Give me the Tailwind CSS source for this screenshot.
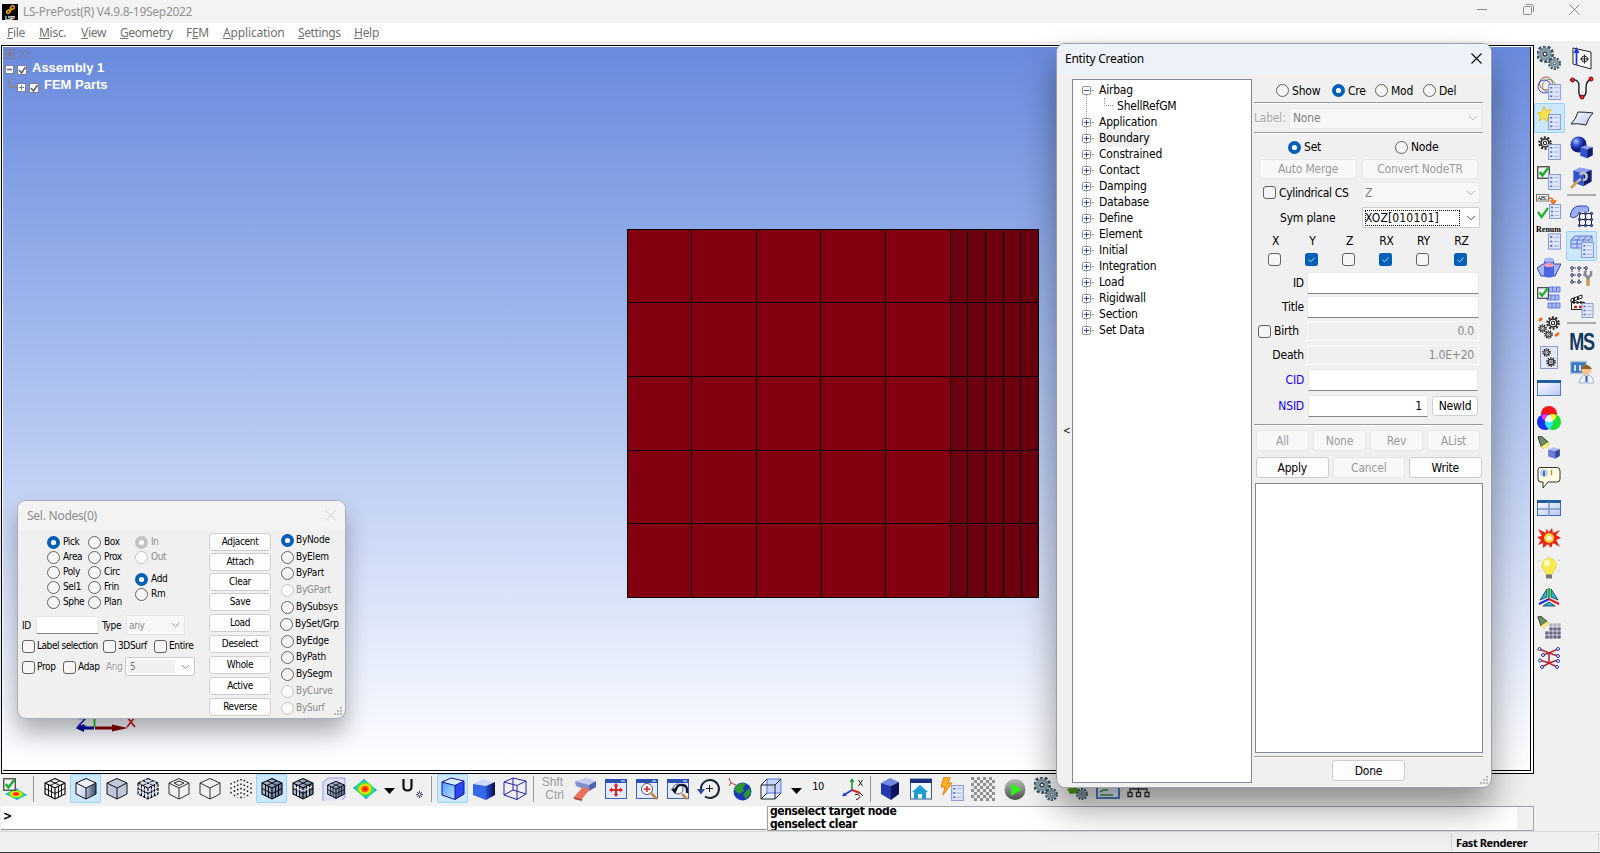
<!DOCTYPE html>
<html lang="en">
<head>
<meta charset="utf-8">
<title>LS-PrePost(R) V4.9.8-19Sep2022</title>
<script src="https://cdn.jsdelivr.net/npm/@tailwindcss/browser@4"></script>
</head>
<body class="w-[1600px] h-[853px] overflow-hidden bg-[#f0f0f0] font-['DejaVu_Sans_Condensed','DejaVu_Sans',sans-serif] text-[12px] text-black whitespace-nowrap relative">

<svg width="0" height="0" class="absolute">
<defs>
<radialGradient id="rainbow"><stop offset="0" stop-color="#e00"/><stop offset=".25" stop-color="#f51"/><stop offset=".42" stop-color="#fe0"/><stop offset=".6" stop-color="#4d3"/><stop offset=".8" stop-color="#1cd"/><stop offset="1" stop-color="#25f"/></radialGradient>
<linearGradient id="gl" x1="0" y1="0" x2="1" y2="1"><stop offset="0" stop-color="#fff"/><stop offset="1" stop-color="#b9c6f2"/></linearGradient>
<linearGradient id="gd" x1="0" y1="0" x2="1" y2="0"><stop offset="0" stop-color="#b4bfd8"/><stop offset="1" stop-color="#3c4a66"/></linearGradient>
<linearGradient id="gs" x1="0" y1="0" x2="1" y2=".4"><stop offset="0" stop-color="#c4cee4"/><stop offset="1" stop-color="#66789c"/></linearGradient>
<linearGradient id="gb" x1="0" y1="0" x2="1" y2="1"><stop offset="0" stop-color="#4a9dff"/><stop offset="1" stop-color="#bfe0ff"/></linearGradient>
<linearGradient id="gn" x1="0" y1="0" x2="1" y2="0"><stop offset="0" stop-color="#2a50e0"/><stop offset="1" stop-color="#0a0a40"/></linearGradient>
<radialGradient id="ball" cx=".35" cy=".3"><stop offset="0" stop-color="#b8c8ff"/><stop offset=".5" stop-color="#3a55d8"/><stop offset="1" stop-color="#101c80"/></radialGradient>
<linearGradient id="gray" x1="0" y1="0" x2="0" y2="1"><stop offset="0" stop-color="#bbb"/><stop offset=".5" stop-color="#888"/><stop offset="1" stop-color="#4a4a4a"/></linearGradient>
<symbol id="ron" viewBox="0 0 13 13"><circle cx="6.5" cy="6.5" r="6.5" fill="#005fb8"/><circle cx="6.5" cy="6.5" r="2.6" fill="#fff"/></symbol>
<symbol id="roff" viewBox="0 0 13 13"><circle cx="6.5" cy="6.5" r="6" fill="#f6f6f6" stroke="#626262"/></symbol>
<symbol id="rdis" viewBox="0 0 13 13"><circle cx="6.5" cy="6.5" r="6" fill="#fbfbfb" stroke="#c3c3c3"/></symbol>
<symbol id="rond" viewBox="0 0 13 13"><circle cx="6.5" cy="6.5" r="6.5" fill="#c3c3c3"/><circle cx="6.5" cy="6.5" r="2.6" fill="#fff"/></symbol>
<symbol id="coff" viewBox="0 0 13 13"><rect x=".5" y=".5" width="12" height="12" rx="2.5" fill="#f6f6f6" stroke="#626262"/></symbol>
<symbol id="con" viewBox="0 0 13 13"><rect width="13" height="13" rx="2.5" fill="#005fb8"/><path d="M3.5 6.8L5.6 8.8L9.6 4.6" fill="none" stroke="#cfe2f3"/></symbol>
<symbol id="chev" viewBox="0 0 10 6"><path d="M1 .8L5 4.8L9 .8" fill="none" stroke="currentColor"/></symbol>
<symbol id="plus" viewBox="0 0 9 9"><rect x=".5" y=".5" width="8" height="8" rx="1" fill="#fafafa" stroke="#8f8f8f"/><path d="M2 4.5H7M4.5 2V7" stroke="#2f4fa8"/></symbol>
<symbol id="minus" viewBox="0 0 9 9"><rect x=".5" y=".5" width="8" height="8" rx="1" fill="#fafafa" stroke="#8f8f8f"/><path d="M2 4.5H7" stroke="#2f4fa8"/></symbol>
<symbol id="grip" viewBox="0 0 9 9"><path d="M6 0h2v2h-2zM6 3h2v2h-2zM6 6h2v2h-2zM3 3h2v2h-2zM3 6h2v2h-2zM0 6h2v2h-2z" fill="#b9b9b9"/></symbol>
<symbol id="grid9" viewBox="0 0 24 24"><path d="M12 1.500L22 6V17L12 22L2 17V6ZM2 6L12 11L22 6M12 11V22" fill="none" stroke="#000" stroke-width="1.100"/><path d="M2 11.500L12 16.500L22 11.500M5.500 7.700V18.700M8.500 9.300V20.300M15.500 9.300V20.300M18.500 7.700V18.700M7 3.750L17 8.500M17 3.750L7 8.500" fill="none" stroke="#000" stroke-width=".9"/></symbol>
<symbol id="list" viewBox="0 0 12 15"><rect x=".5" y=".5" width="11" height="14" fill="#dfe8fc" stroke="#8a9bd0"/><path d="M2 3.500h2M2 7.500h2M2 11.500h2" stroke="#4a62c8" stroke-width="1.600"/><path d="M5.500 3.500h4.500M5.500 7.500h4.500M5.500 11.500h4.500" stroke="#a4b2e0"/></symbol>
<symbol id="gear" viewBox="0 0 16 16"><circle cx="8" cy="8" r="6.500" fill="none" stroke="#222" stroke-width="2.400" stroke-dasharray="2.200 1.880"/><circle cx="8" cy="8" r="4.500" fill="#f4f4f4" stroke="#222" stroke-width="1.800"/><circle cx="8" cy="8" r="1.900" fill="#fff" stroke="#222" stroke-width="1.200"/></symbol>
<symbol id="steel" viewBox="0 0 16 16"><circle cx="8" cy="8" r="6.500" fill="none" stroke="#3e5260" stroke-width="3" stroke-dasharray="2.600 1.480"/><circle cx="8" cy="8" r="4.400" fill="#c6d6de" stroke="#7d97a6" stroke-width="2.800"/><circle cx="8" cy="8" r="1.800" fill="#f0f0f0" stroke="#2a3a44" stroke-width="1.200"/></symbol>
<symbol id="gears" viewBox="0 0 24 24"><use href="#steel" x="-1" y="-1" width="18" height="18"/><use href="#steel" x="11" y="11" width="13" height="13"/></symbol>
<symbol id="tick" viewBox="0 0 12 12"><rect x=".7" y=".7" width="10.600" height="10.600" fill="#f4f4f4" stroke="#444" stroke-width="1.200"/><path d="M2.500 5.500L5 8.800L10.500 1.500" fill="none" stroke="#12b025" stroke-width="2.200"/></symbol>
<symbol id="bcube" viewBox="0 0 24 24"><path d="M2 5L9 1.500L22 4L13 8Z" fill="#8ba0f0"/><path d="M2 5L13 8V22L2 18Z" fill="#3553cc"/><path d="M13 8L22 4V17L13 22Z" fill="#111c70"/></symbol>
<symbol id="scube" viewBox="0 0 24 24"><path d="M2 6L11 2L22 5L14 9Z" fill="#b0baf0"/><path d="M2 6L14 9V22L2 18Z" fill="#6a7cd8"/><path d="M14 9L22 5V17L14 22Z" fill="#3a449c"/></symbol>
<symbol id="lamp" viewBox="0 0 14 14"><path d="M1 1L5 .5L12 6.500L4.500 11.500Z" fill="#6c8c68" stroke="#2a3a28"/><path d="M4.500 11.500L12 6.500L13.500 9.500L7 13.500Z" fill="#fff27a" stroke="#b8a840" stroke-width=".5"/></symbol>
<symbol id="win" viewBox="0 0 24 24"><rect x="1.500" y="2.500" width="21" height="19" fill="#e4ebff" stroke="#3b62b4"/><path d="M1 4h22" stroke="#2a52b0" stroke-width="4"/><path d="M17 4h4" stroke="#fff"/></symbol>
</defs>
</svg>

<div class="flex flex-col w-full h-full">
  <!-- title bar -->
  <header class="h-[23px] bg-[#f3f3f3] flex items-center pl-0.5 pr-5 text-[#929292] font-['Noto_Sans','Open_Sans',sans-serif] text-[12px]">
    <svg class="w-4 h-4 mr-[5px]" viewBox="0 0 16 16"><rect width="16" height="16" fill="#000"/><path d="M9 4.500a1.800 1.800 0 1 1 3-2a1.800 1.800 0 1 1-3 2M8.500 5.500l-3 1a1.500 1.500 0 1 0 2 2l1.500-2.500" fill="none" stroke="#f5a800" stroke-width="1.500"/><text x="3" y="15.500" font-size="6" font-weight="bold" fill="#fff" font-family="Liberation Sans" textLength="10">LSP</text></svg>
    <span class="tracking-[-0.29px]">LS-PrePost(R) V4.9.8-19Sep2022</span>
    <div class="ml-auto -mt-1 flex items-center gap-[35px] text-[#8a8a8a]">
      <svg class="w-[11px] h-[11px]" viewBox="0 0 11 11"><path d="M0 5.500H10" stroke="currentColor"/></svg>
      <svg class="w-[11px] h-[11px]" viewBox="0 0 11 11"><path d="M.5 3.500a1 1 0 0 1 1-1h6a1 1 0 0 1 1 1v6a1 1 0 0 1-1 1h-6a1 1 0 0 1-1-1zM3 .5h5a2.500 2.500 0 0 1 2.500 2.500v5" fill="none" stroke="currentColor"/></svg>
      <svg class="w-[11px] h-[11px]" viewBox="0 0 11 11"><path d="M.5 .5L10.500 10.500M10.500 .5L.5 10.500" stroke="currentColor"/></svg>
    </div>
  </header>
  <!-- menu bar -->
  <nav class="h-[18px] bg-white flex items-center pt-[2px] pl-[7px] text-[#6f6f6f] font-['Noto_Sans','Open_Sans',sans-serif] text-[12px] tracking-[-0.28px]">
    <span class="w-8"><u>F</u>ile</span><span class="w-[42px]"><u>M</u>isc.</span><span class="w-[39px]"><u>V</u>iew</span><span class="w-[66px] tracking-[-0.42px]"><u>G</u>eometry</span><span class="w-[37px]">F<u>E</u>M</span><span class="w-[75px] tracking-[-0.15px]"><u>A</u>pplication</span><span class="w-14 tracking-[-0.4px]"><u>S</u>ettings</span><span><u>H</u>elp</span>
  </nav>

  <div class="flex h-[765px]">
    <div class="w-[1534px] flex flex-col">
      <!-- 3D viewport -->
      <div class="mt-1 ml-px w-[1533px] h-[729px] shrink-0 border border-black bg-white pt-px pl-px">
        <div class="relative w-[1528px] h-[724px] border-r border-b border-black bg-linear-to-b from-[#698add] to-white">
          <svg class="absolute inset-0 w-[1527px] h-[723px]" viewBox="3 47 1527 723" shape-rendering="crispEdges">
            <path d="M627 229H950V597H627Z" fill="#820010"/><path d="M950 229H1038V597H950Z" fill="#6c000f"/>
            <path d="M627.500 229V598M691.500 229V597M756.500 229V597M820.500 229V523M821.500 523V597M885.500 229V597M950.500 229V597M967.500 229V597M985.500 229V597M1003.500 229V597M1020.500 229V564M1021.500 564V597M1038.500 229V598M627 229.500H1038M627 302.500H1038M627 376.500H1038M627 450.500H1030M1030 449.500H1038M627 523.500H1038M627 597.500H1038" fill="none" stroke="#000"/>
          </svg>
          <svg class="absolute left-[69px] top-[665px] w-[68px] h-[26px]" viewBox="72 712 68 26">
            <path d="M94.500 714V727" stroke="#2c2" stroke-width="2"/><path d="M94 728H80" stroke="#00009a" stroke-width="3"/><path d="M75.500 728L84 724V732Z" fill="#00009a"/><path d="M95 728H113" stroke="#8a0000" stroke-width="3"/><path d="M112 724.500L128 728L112 731.500Z" fill="#8a0000"/>
            <path d="M127 717L135 727M135 717L127 727" stroke="#d01010" stroke-width="1.600"/><path d="M78 718.500H85.500L78.500 726H86" stroke="#1818c0" stroke-width="1.600" fill="none"/>
          </svg>
          <div class="absolute left-0 top-0 pl-[2px] pt-px text-white font-['Liberation_Sans',sans-serif] font-bold text-[13px] tracking-0">
            <svg class="block w-[26px] h-3" viewBox="0 0 26 12"><rect x=".5" y="1.500" width="9" height="9" fill="none" stroke="#7d7d92"/><rect x="2.500" y="3.500" width="5" height="5" fill="#7d7d92"/><path d="M14 2l5 4-5 4M19 2l5 4-5 4" fill="none" stroke="#7d7d92"/></svg>
            <div class="flex items-center h-[17px]">
              <svg class="w-[23px] h-[15px] mr-1" viewBox="0 0 23 15"><rect x=".5" y="4.500" width="8" height="8" fill="#fff" stroke="#7d7d92"/><path d="M2 8.500h5" stroke="#7d7d92" stroke-width="2"/><rect x="12.500" y="4.500" width="9" height="9" fill="#fff" stroke="#7d7d92"/><path d="M14 9l2.500 3 4-6" fill="none" stroke="#556" stroke-width="1.400"/></svg>
              <span class="-mt-0.5">Assembly 1</span>
            </div>
            <div class="flex items-center h-[17px]">
              <svg class="w-[36px] h-[17px] mr-[3px]" viewBox="0 0 36 17"><path d="M4.500 0V10H12" fill="none" stroke="#888896" stroke-width="2"/><rect x="12.500" y="6.500" width="8" height="8" fill="#fff" stroke="#7d7d92"/><path d="M14 10.500h5M16.500 8v5" stroke="#7d7d92"/><rect x="24.500" y="6.500" width="9" height="9" fill="#fff" stroke="#7d7d92"/><path d="M26 11l2.500 3 4-6" fill="none" stroke="#556" stroke-width="1.400"/></svg>
              <span class="-mt-0.5">FEM Parts</span>
            </div>
          </div>
        </div>
      </div>

      <!-- bottom toolbar -->
      <div class="flex items-center h-[29px] [&>svg]:shrink-0">
        <svg class="w-6 h-6 mx-[3px]" viewBox="0 0 24 24"><path d="M2 17L13 11L24 18L14 23Z" fill="url(#rainbow)"/><use href="#tick" x="0" y="1" width="13" height="13"/></svg>
        <div class="w-px h-[26px] ml-[3px] mr-[5px] bg-[#999]"></div>
        <div class="w-[31px] flex justify-center"><svg class="w-6 h-6"><use href="#grid9"/></svg></div>
        <div class="w-[31px] h-[29px] flex justify-center items-center bg-[#cce8ff] border border-[#99d1ff] rounded-xs"><svg class="w-6 h-6" viewBox="0 0 24 24"><path d="M12 1.500L22 6L12 11L2 6Z" fill="#eef1ff"/><path d="M2 6L12 11V22L2 17Z" fill="url(#gl)"/><path d="M12 11L22 6V17L12 22Z" fill="url(#gd)"/><path d="M12 1.500L22 6V17L12 22L2 17V6ZM2 6L12 11L22 6M12 11V22" fill="none" stroke="#111"/></svg></div>
        <div class="w-[31px] flex justify-center"><svg class="w-6 h-6" viewBox="0 0 24 24"><path d="M12 1.500L22 6V17L12 22L2 17V6Z" fill="#c0c9dc"/><path d="M12 1.500L22 6V17L12 22L2 17V6ZM2 6L12 11L22 6M12 11V22" fill="none" stroke="#111"/></svg></div>
        <div class="w-[31px] flex justify-center"><svg class="w-6 h-6" viewBox="0 0 24 24"><path d="M12 1.500L22 6V17L12 22L2 17V6Z" fill="#d8def0"/><use href="#grid9" stroke-dasharray="3 1"/></svg></div>
        <div class="w-[31px] flex justify-center"><svg class="w-6 h-6" viewBox="0 0 24 24"><path d="M12 1.500L22 6V17L12 22L2 17V6ZM2 6L12 11L22 6M12 11V22M7 6L12 4L17 6L12 8.500Z" fill="none" stroke="#333"/></svg></div>
        <div class="w-[31px] flex justify-center"><svg class="w-6 h-6" viewBox="0 0 24 24"><path d="M12 1.500L22 6V17L12 22L2 17V6ZM2 6L12 11L22 6M12 11V22" fill="none" stroke="#333"/></svg></div>
        <div class="w-[31px] flex justify-center"><svg class="w-6 h-6" viewBox="0 0 24 24"><path d="M12 2V22M2 6V18M22 6V18M5.500 4.500V20M8.700 3V21M15.300 3V21M18.500 4.500V20" stroke="#222" stroke-width="1.500" stroke-dasharray="1.600 2.800"/></svg></div>
        <div class="w-[31px] h-[29px] flex justify-center items-center bg-[#cce8ff] border border-[#99d1ff] rounded-xs"><svg class="w-6 h-6" viewBox="0 0 24 24"><path d="M12 1.500L22 6V17L12 22L2 17V6Z" fill="url(#gs)"/><use href="#grid9"/></svg></div>
        <div class="w-[31px] flex justify-center"><svg class="w-6 h-6" viewBox="0 0 24 24"><path d="M12 1.500L22 6V17L12 22L2 17V6Z" fill="url(#gs)"/><use href="#grid9"/><path d="M3 9.500L12 14L21 9.500M7 9V19M17 9V19" fill="none" stroke="#fff"/></svg></div>
        <div class="w-[31px] flex justify-center"><svg class="w-6 h-6" viewBox="0 0 24 24"><path d="M1 24V5L6 1H23V20L20 23" fill="#dfe0fb" stroke="#9a9af0"/><path d="M14 4.500L22.500 8V17.500L14 21.500L5.500 17.500V8Z" fill="url(#gs)"/><use href="#grid9" x="4" y="3" width="20" height="20"/></svg></div>
        <div class="w-[31px] flex justify-center"><svg class="w-6 h-6" viewBox="0 0 24 24"><path d="M0 11L11 2L24 13L13 22Z" fill="url(#rainbow)"/></svg></div>
        <div class="w-[18px] flex justify-center"><svg class="w-[11px] h-[6px] mt-1" viewBox="0 0 11 6"><path d="M0 0H11L5.500 6Z"/></svg></div>
        <div class="w-7 flex justify-center"><svg class="w-6 h-6" viewBox="0 0 24 24"><path d="M3.500 2V9.500Q3.500 13.500 7.500 13.500Q11.500 13.500 11.500 9.500V2" fill="none" stroke="#111" stroke-width="2.200"/><path d="M19.500 14v7M16 17.500h7M17 15l5 5M22 15l-5 5" stroke="#446"/><circle cx="19.500" cy="17.500" r="1.500" fill="#fff" stroke="#446"/></svg></div>
        <div class="w-px h-[26px] ml-[5px] mr-[5px] bg-[#999]"></div>
        <div class="w-[31px] h-[29px] flex justify-center items-center bg-[#cce8ff] border border-[#99d1ff] rounded-xs"><svg class="w-6 h-6" viewBox="0 0 24 24"><path d="M1 5L10 1L23 4L14 8.500Z" fill="#d6ecff"/><path d="M1 5L14 8.500V22.500L1 18Z" fill="url(#gb)"/><path d="M14 8.500L23 4V17L14 22.500Z" fill="#2a48f0"/><path d="M1 5L10 1L23 4V17L14 22.500L1 18ZM1 5L14 8.500L23 4M14 8.500V22.500" fill="none" stroke="#1111a0"/></svg></div>
        <div class="w-[31px] flex justify-center"><svg class="w-6 h-6" viewBox="0 0 24 24"><path d="M1 7L10 2L23 5L14 9Z" fill="#cfdcff"/><path d="M1 7L14 9V23L1 18Z" fill="#3668ea"/><path d="M14 9L23 5V18L14 23Z" fill="url(#gn)"/></svg></div>
        <div class="w-[31px] flex justify-center"><svg class="w-6 h-6" viewBox="0 0 24 24"><path d="M1 5L10 1L23 4V17L14 22.500L1 18ZM1 5L14 8.500L23 4M14 8.500V22.500M10 1V13L1 18M10 13L23 17" fill="none" stroke="#2222b0"/></svg></div>
        <div class="w-px h-[26px] ml-[3px] mr-[3px] bg-[#999]"></div>
        <div class="w-8 flex flex-col items-end pr-[5px] text-[#9b9b9b] font-['Liberation_Sans',sans-serif] text-[12px] leading-[13px]"><span class="mr-px">Shft</span><span>Ctrl</span></div>
        <div class="w-[31px] flex justify-center"><svg class="w-6 h-6" viewBox="0 0 24 24"><path d="M2 4L13 1L23 4L16 8Z" fill="#c5cdf3"/><path d="M2 4L16 8V14L3 9Z" fill="#8090d0"/><path d="M16 8L23 4V10L16 14Z" fill="#5262b0"/><path d="M1 20L10 10L17 12L9 22Z" fill="#e8705c"/><path d="M1 20L9 22V24L1 22Z" fill="#b04030"/></svg></div>
        <div class="w-[31px] flex justify-center"><svg class="w-6 h-6"><use href="#win"/><path d="M12 7V19M6 13H18" stroke="#d22" stroke-width="2"/><path d="M12 6l2.500 3h-5zM12 20l2.500-3h-5zM5 13l3-2.500v5zM19 13l-3-2.500v5z" fill="#d22"/></svg></div>
        <div class="w-[31px] flex justify-center"><svg class="w-6 h-6"><use href="#win"/><circle cx="12" cy="12" r="5.500" fill="#fff" stroke="#556"/><path d="M12 9V15M9 12H15" stroke="#d22" stroke-width="1.600"/><path d="M16 16L22 22" stroke="#c98a3a" stroke-width="2.500"/></svg></div>
        <div class="w-[31px] flex justify-center"><svg class="w-6 h-6"><use href="#win"/><circle cx="12" cy="12" r="5" fill="#fff" stroke="#556"/><path d="M9 14Q11 7 17 8Q22 9 21 16" fill="none" stroke="#111830" stroke-width="2.400"/><path d="M5 12L12 11L9 17Z" fill="#111830"/><path d="M16 17L21 22" stroke="#c98a3a" stroke-width="2.500"/></svg></div>
        <div class="w-[31px] flex justify-center"><svg class="w-6 h-6" viewBox="0 0 24 24"><path d="M4 13A9 9 0 1 1 8 19.500" fill="none" stroke="#1c2436" stroke-width="2"/><path d="M12.500 8V15M9 11.500H16" stroke="#222"/><path d="M0 12H8L4 17.500Z" fill="#2c4c9c"/></svg></div>
        <div class="w-[31px] flex justify-center"><svg class="w-6 h-6" viewBox="0 0 24 24"><circle cx="14.500" cy="14.500" r="9" fill="#1c36b8"/><path d="M8 9Q13 4 18 7L15 11L16 14L11 17L6 13ZM18 14L22 11L23 16L18 22L15 18Z" fill="#2a9a34"/><path d="M1 1L3 6L8 8M3 6L1 9" stroke="#c33" fill="none"/></svg></div>
        <div class="w-[31px] flex justify-center"><svg class="w-6 h-6" viewBox="0 0 24 24"><path d="M2 8L8 2H22V16L16 22H2Z" fill="#e8efff"/><path d="M8 2H22V16H8Z" fill="#c5d5ff" stroke="#5870d8"/><path d="M2 8H16V22H2ZM2 8L8 2M16 8L22 2M16 22L22 16M2 22L8 16" fill="none" stroke="#222"/></svg></div>
        <div class="w-5 flex justify-center"><svg class="w-[11px] h-[6px] mt-1" viewBox="0 0 11 6"><path d="M0 0H11L5.500 6Z"/></svg></div>
        <div class="w-6 text-center text-[11px] -mt-[3px] tracking-[-0.5px]">10</div>
        <div class="w-[31px] ml-[7px] flex justify-center"><svg class="w-6 h-6" viewBox="0 0 24 24"><path d="M11 13V3" stroke="#1a9a2a" stroke-width="1.600"/><path d="M8.500 5L11 1L13.500 5Z" fill="#1a9a2a"/><path d="M11 13L3 18" stroke="#1a3ad0" stroke-width="1.600"/><path d="M1 19.500L3 15.500L6 18.500Z" fill="#1a3ad0"/><path d="M11 13L19 16" stroke="#d02020" stroke-width="2"/><path d="M17.500 3l4 6M21.500 3l-4 6M14 17.500q4-1 5 2q-1 3-4 3M19 16l3 3" stroke="#222" fill="none"/></svg></div>
        <div class="w-px h-[26px] ml-[2px] mr-[3px] bg-[#999]"></div>
        <div class="w-[31.2px] shrink-0 flex justify-center"><svg class="w-6 h-6" viewBox="0 0 24 24"><path d="M3 6L12 1L21 5L13 9Z" fill="#7088e0"/><path d="M3 6L13 9V23L3 17Z" fill="#2438b0"/><path d="M13 9L21 5V17L13 23Z" fill="#0c1460"/></svg></div>
        <div class="w-[31.2px] shrink-0 flex justify-center"><svg class="w-6 h-6" viewBox="0 0 24 24"><rect x="1.500" y="2" width="21" height="20" fill="#f2f6fb" stroke="#3a5b8c"/><path d="M1 4H23" stroke="#1c2f80" stroke-width="4"/><path d="M11 8L19 15H17V22H13V17H9V22H5V15H3Z" fill="#1a9fd0"/></svg></div>
        <div class="w-[31.2px] shrink-0 flex justify-center"><svg class="w-6 h-6" viewBox="0 0 24 24"><path d="M4 0H10L8 6H12L3 18L5 10H1Z" fill="#ffb21c" stroke="#e07a10"/><use href="#list" x="11" y="8" width="13" height="16"/></svg></div>
        <div class="w-[31.2px] shrink-0 flex justify-center"><svg class="w-6 h-6" viewBox="0 0 24 24"><defs><pattern id="chk" width="6" height="6" patternUnits="userSpaceOnUse"><rect width="6" height="6" fill="#ececec"/><path d="M0 0h3v3h-3zM3 3h3v3h-3z" fill="#909090"/></pattern></defs><rect width="24" height="24" fill="url(#chk)"/></svg></div>
        <div class="w-[31.2px] shrink-0 flex justify-center"><svg class="w-6 h-6" viewBox="0 0 24 24"><circle cx="13" cy="12.500" r="10.500" fill="url(#gray)"/><path d="M9 6L20 12.500L9 19Z" fill="#2ef01a"/></svg></div>
        <div class="w-[31.2px] shrink-0 flex justify-center"><svg class="w-6 h-6 overflow-visible"><use href="#gears"/></svg></div>
        <div class="w-[31.2px] shrink-0 flex justify-center"><svg class="w-6 h-6" viewBox="0 0 24 24"><path d="M2 12L12 9L14 16L5 17Z" fill="#4aa012"/><use href="#steel" x="11" y="11" width="12" height="12"/></svg></div>
        <div class="w-[31.2px] shrink-0 flex justify-center"><svg class="w-6 h-6" viewBox="0 0 24 24"><rect x="1" y="2" width="22" height="19" fill="#e6eeff" stroke="#4f7fc0" stroke-width="2"/><path d="M4 15Q8 12 12 13M4 18H17" stroke="#3a9a3a" fill="none" stroke-width="1.500"/></svg></div>
        <div class="w-[31.2px] shrink-0 flex justify-center"><svg class="w-6 h-6" viewBox="0 0 24 24"><path d="M3 15V12H20V15M11.500 8V15M1 15.500h4v4H1zM9.500 15.500h4v4h-4zM18 15.500h4v4h-4z" fill="none" stroke="#333" stroke-width="1.300"/></svg></div>
      </div>
    </div>

    <!-- side toolbars -->
    <div class="w-[30px] pt-[2px] flex flex-col items-center [&_svg]:w-6 [&_svg]:h-6 [&>div]:w-[31px] [&>div]:h-[30px] [&>div]:flex [&>div]:items-center [&>div]:justify-center [&>div]:shrink-0">
      <div><svg class="overflow-visible"><use href="#gears"/></svg></div>
      <div><svg viewBox="0 0 24 24"><circle cx="9" cy="7.500" r="6.500" fill="none" stroke="#c44"/><circle cx="12" cy="10" r="6.500" fill="none" stroke="#5a5"/><circle cx="7.500" cy="10.500" r="6.500" fill="none" stroke="#44c"/><use href="#list" x="11" y="8" width="13" height="16"/></svg></div>
      <div class="bg-[#cce8ff] border border-[#99d1ff] rounded-xs"><svg viewBox="0 0 24 24"><path d="M7 0L9 5L14 3L12 8L16 10L11 11L10 16L7 12L2 15L4 10L0 7L5 6Z" fill="#ffe34a" stroke="#d8b018" stroke-width=".7"/><use href="#list" x="11" y="8" width="13" height="16"/></svg></div>
      <div><svg viewBox="0 0 24 24"><use href="#gear" x="1" y="0" width="14" height="14"/><use href="#list" x="11" y="8" width="13" height="16"/></svg></div>
      <div><svg viewBox="0 0 24 24"><use href="#tick" x="0" y="0" width="13" height="13"/><use href="#list" x="11" y="8" width="13" height="16"/></svg></div>
      <div><svg viewBox="0 0 24 24" class="overflow-visible"><rect x="-.5" y="-1.500" width="12" height="6.500" fill="#fff" stroke="#777"/><text x="0" y="4" font-size="6" font-family="Liberation Serif" textLength="11">ABC</text><path d="M12 2Q16 2 16 5M14 5h4.500l-2.200 3z" fill="none" stroke="#e8681a" stroke-width="1.500"/><use href="#list" x="12" y="8" width="12" height="15"/><path d="M1 16L4.500 21L11 12" fill="none" stroke="#22b030" stroke-width="2.200"/></svg></div>
      <div><svg viewBox="0 0 24 24" class="overflow-visible"><text x="-1" y="5.500" font-size="8" font-weight="bold" font-family="Liberation Serif" textLength="25">Renum</text><use href="#list" x="11" y="7" width="13" height="17"/></svg></div>
      <div><svg viewBox="0 0 24 24"><path d="M0 12L6 8H24L18 20H4Z" fill="#a4b4fa" stroke="#3048c0"/><path d="M7 4V20Q12 23 17 20V4" fill="#4a66e0"/><ellipse cx="12" cy="4" rx="5" ry="2.500" fill="#a8b8ff"/><ellipse cx="12" cy="9" rx="5" ry="2" fill="#ff9ab8"/></svg></div>
      <div><svg viewBox="0 0 24 24"><path d="M12 1h11v5H12zM10 9h12v5H10zM11 17h12v5H11z" fill="#a8b8f8"/><path d="M12 1h11v5H12zM10 9h12v5H10zM11 17h12v5H11zM15.500 1v5M19.500 1v5M14 9v5M18 9v5M15 17v5M19 17v5" fill="none" stroke="#5a76dc" stroke-width=".9"/><use href="#tick" x="0" y="1" width="12" height="12"/></svg></div>
      <div><svg viewBox="0 0 24 24"><use href="#gear" x="9" y="0" width="14" height="14"/><use href="#gear" x="1" y="8" width="9" height="9"/><use href="#gear" x="7" y="14" width="9" height="9"/><path d="M2 5L5 2M18 20L22 17" stroke="#e8681a" stroke-width="2.500"/></svg></div>
      <div><svg viewBox="0 0 24 24"><rect x="3.500" y=".5" width="17" height="22" fill="#e2eafc" stroke="#8a9bd0"/><use href="#gear" x="5" y="2" width="9" height="9"/><use href="#gear" x="9" y="11" width="10" height="10"/></svg></div>
      <div><svg viewBox="0 0 24 24"><rect x=".5" y="4.500" width="23" height="15" fill="url(#gl)" stroke="#4a80c0"/><path d="M0 5.500H24" stroke="#1f5f9f" stroke-width="3"/></svg></div>
      <div><svg viewBox="0 0 24 24"><circle cx="12" cy="8" r="8" fill="#f01818"/><circle cx="8" cy="16" r="8" fill="#1830f0"/><circle cx="16" cy="16" r="8" fill="#18e030"/><path d="M8 16a8 8 0 0 1 4-7a8 8 0 0 1 0 14a8 8 0 0 1-4-7z" fill="#30e8f0"/><path d="M4.300 9.500A8 8 0 0 1 12 9A8 8 0 0 0 8 15A8 8 0 0 1 4.300 9.500Z" fill="#f040e0"/><path d="M19.700 9.500A8 8 0 0 0 12 9A8 8 0 0 1 16 15A8 8 0 0 0 19.700 9.500Z" fill="#ffee30"/><path d="M12 9A8 8 0 0 1 16 15A8 8 0 0 1 8 15A8 8 0 0 1 12 9Z" fill="#fff"/></svg></div>
      <div><svg viewBox="0 0 24 24"><use href="#lamp" x="0" y="0" width="13" height="13"/><use href="#scube" x="10" y="10" width="14" height="14"/></svg></div>
      <div><svg viewBox="0 0 24 24"><path d="M3 1.500H20Q23 1.500 23 5V13Q23 16 20 16H11L6 22V16H4Q1 16 1 13V4Q1 1.500 3 1.500Z" fill="#ffffe0" stroke="#333"/><circle cx="7" cy="7" r="4" fill="#b8d0ec"/><path d="M7 5v5" stroke="#2448a8" stroke-width="1.500"/><path d="M14.500 4v5" stroke="#c08a40" stroke-width="1.500"/></svg></div>
      <div><svg viewBox="0 0 24 24"><rect x=".5" y="4.500" width="23" height="15" fill="url(#gl)" stroke="#3a70b8"/><path d="M0 5.500H24" stroke="#1f5f9f" stroke-width="3"/><path d="M12 6V20M1 13H23" stroke="#7a96cc" stroke-width="1.500"/></svg></div>
      <div><svg viewBox="0 0 24 24"><path d="M12 6L15 2L16 7L23 4L19 9L24 12L19 14L23 21L16 17L14 22L11 18L6 22L6 17L1 19L4 14L0 11L5 10L1 3L9 7L9 3Z" fill="#f02010"/><circle cx="12" cy="12" r="5" fill="#ffd030"/><circle cx="12" cy="12" r="2.500" fill="#fff"/></svg></div>
      <div><svg viewBox="0 0 24 24"><path d="M12 2a7.500 7.500 0 0 1 7.500 7.500c0 4-4 5-4 9h-7c0-4-4-5-4-9A7.500 7.500 0 0 1 12 2z" fill="#f6ec50" stroke="#d8cc60" stroke-width=".6"/><ellipse cx="10" cy="7" rx="3" ry="3.500" fill="#fffcb8"/><path d="M9 18.500h6v4H9z" fill="#777"/><path d="M1 4l2 1M23 4l-2 1M1 15l2-1M23 15l-2-1" stroke="#ccc"/></svg></div>
      <div><svg viewBox="0 0 24 24"><path d="M10 3L3 14L10 11ZM14 3L21 14L14 11ZM6 20L12 16L18 20Z" fill="#28b8d8" stroke="#134" stroke-width=".8"/><path d="M12 13V2" stroke="#18c030" stroke-width="2"/><path d="M12 13L2 18" stroke="#2030e0" stroke-width="2"/><path d="M12 13L22 18" stroke="#e02020" stroke-width="2"/></svg></div>
      <div><svg viewBox="0 0 24 24"><use href="#lamp" x="0" y="0" width="12" height="12"/><g fill="none" stroke="#404068" stroke-width="1.100"><path stroke="#a0a0b8" d="M13 8h2v2h-2zM17 8h2v2h-2zM21 8h2v2h-2z"/><path d="M13 12h2v2h-2zM17 12h2v2h-2zM21 12h2v2h-2zM9 16h2v2h-2zM13 16h2v2h-2zM17 16h2v2h-2zM21 16h2v2h-2zM9 20h2v2h-2zM13 20h2v2h-2zM17 20h2v2h-2zM21 20h2v2h-2z"/></g></svg></div>
      <div><svg viewBox="0 0 24 24"><path d="M2 3L12 7L21 3M6 9L12 7L21 10M12 7V17M3 14L12 17L21 14M5 21L12 17L20 21" fill="none" stroke="#b82030" stroke-width="1.500"/><g fill="#fff" stroke="#2030a0"><circle cx="2.500" cy="3" r="1.500"/><circle cx="21" cy="3" r="1.500"/><circle cx="6" cy="9" r="1.500"/><circle cx="21" cy="10" r="1.500"/><circle cx="3" cy="14.500" r="1.500"/><circle cx="21" cy="15" r="1.500"/><circle cx="5" cy="21" r="1.500"/><circle cx="20" cy="21" r="1.500"/></g></svg></div>
    </div>
    <div class="w-[35px] pt-[2px] flex flex-col items-center [&_svg]:w-6 [&_svg]:h-6 [&>div]:w-[31px] [&>div]:h-[30px] [&>div]:flex [&>div]:items-center [&>div]:justify-center [&>div]:shrink-0 [&>hr]:shrink-0">
      <div><svg viewBox="0 0 24 24"><path d="M3 2L21 6V23L3 18Z" fill="#fff" stroke="#222"/><path d="M6.500 19V5" stroke="#1838e0" stroke-width="1.800"/><path d="M3.500 7L6.500 1L9.500 7Z" fill="#1838e0"/><circle cx="14.500" cy="13" r="3" fill="none" stroke="#222"/><path d="M14.500 8.500v9M10 13h9" stroke="#222"/></svg></div>
      <div><svg viewBox="0 0 24 24"><path d="M2 4Q9 3 9 10Q8 21 12 21Q17 20 16 12Q16 5 21 3" fill="none" stroke="#222" stroke-width="1.400"/><g fill="#f02828" stroke="#700"><circle cx="2.500" cy="4" r="2"/><circle cx="12" cy="21" r="2"/><circle cx="21" cy="3" r="2"/></g></svg></div>
      <div><svg viewBox="0 0 24 24"><path d="M1 18Q6 13 8 6Q15 6 23 7Q18 12 16 19Q8 17 1 18Z" fill="url(#gl)" stroke="#222"/></svg></div>
      <div><svg viewBox="0 0 24 24"><circle cx="8.500" cy="8.500" r="8" fill="url(#ball)"/><use href="#bcube" x="9" y="8" width="15" height="16"/></svg></div>
      <div><svg viewBox="0 0 24 24"><use href="#bcube" x="1" y="0" width="23" height="22"/><path d="M1 22L8 15" stroke="#c9a060" stroke-width="3"/><path d="M8 15L11 13M10 9a3.500 3.500 0 1 1 3 5" fill="none" stroke="#c4c4c4" stroke-width="2.500"/></svg></div>
      <hr class="w-[29px] border-0 h-0.5 bg-[#aaa] mt-[1px] mb-[5px]">
      <div><svg viewBox="0 0 24 24"><path d="M0 12Q2 3 8 2L16 2Q20 3 18 9L9 11L3 14Z" fill="#9cb0f8" stroke="#2c44b0"/><path d="M8 8h15v15H8z" fill="#f0f2ff"/><path d="M9.500 9.500h12v12h-12zM15.500 9.500v12M9.500 15.500h12" fill="none" stroke="#222"/><g fill="#4a5ad0" stroke="#223" stroke-width=".6"><circle cx="9.500" cy="9.500" r="1.300"/><circle cx="15.500" cy="9.500" r="1.300"/><circle cx="21.500" cy="9.500" r="1.300"/><circle cx="9.500" cy="15.500" r="1.300"/><circle cx="15.500" cy="15.500" r="1.300"/><circle cx="21.500" cy="15.500" r="1.300"/><circle cx="9.500" cy="21.500" r="1.300"/><circle cx="15.500" cy="21.500" r="1.300"/><circle cx="21.500" cy="21.500" r="1.300"/></g></svg></div>
      <div class="bg-[#cce8ff] border border-[#99d1ff] rounded-xs"><svg viewBox="0 0 24 24"><path d="M1 6L5 2H22L19 6V14H1Z" fill="#c0ceff"/><path d="M1 6L5 2H22V10L19 14H1ZM1 6H19L22 2M1 10H19M7 6V14M13 6V14M19 6V14M7 6L11 2M13 6L17 2" fill="none" stroke="#5a76d4"/><use href="#list" x="11" y="8" width="13" height="16"/></svg></div>
      <div><svg viewBox="0 0 24 24"><path d="M2 4h14M2 11h14M2 18h10M2 4v14M9 4v14M16 4v8" stroke="#556" stroke-dasharray="4 1.500"/><g fill="#fff" stroke="#2a2a60"><circle cx="2" cy="4" r="1.300"/><circle cx="9" cy="4" r="1.300"/><circle cx="16" cy="4" r="1.300"/><circle cx="2" cy="11" r="1.300"/><circle cx="9" cy="11" r="1.300"/><circle cx="2" cy="18" r="1.300"/><circle cx="9" cy="18" r="1.300"/></g><path d="M18 14V22" stroke="#c99a60" stroke-width="3.500"/><path d="M15 7v4l3 3 3-3V7" fill="none" stroke="#889" stroke-width="2.500"/></svg></div>
      <div><svg viewBox="0 0 24 24"><path d="M1 5L12 1V4L1 8Z" fill="#fff" stroke="#222"/><path d="M4 4v3M8 3v2.500" stroke="#222" stroke-width="2"/><rect x="1.500" y="8.500" width="13" height="7" fill="#fff" stroke="#222"/><path d="M3 8.500h11" stroke="#222" stroke-width="2.500" stroke-dasharray="2 1.500"/><path d="M4 13h3M9 13h3" stroke="#c22" stroke-width="2.500"/><use href="#list" x="11" y="9" width="13" height="15"/></svg></div>
      <hr class="w-[29px] border-0 h-0.5 bg-[#aaa] mt-px mb-[3px]">
      <div class="font-['Liberation_Sans',sans-serif] font-bold text-[20px] leading-[30px] text-[#123a5c] tracking-[-1.5px] [transform:scaleX(0.9)_scaleY(1.15)]">MS</div>
      <div><svg viewBox="0 0 24 24"><rect x=".5" y="1.500" width="16" height="12" fill="#3a78c0" stroke="#b8c4d8" stroke-width="1.500"/><path d="M5 5v6M10 5v6" stroke="#fff" stroke-width="1.500"/><circle cx="16.500" cy="10" r="5" fill="#f4c48c"/><path d="M11 9Q16 1 22 9Z" fill="#8a5a28"/><path d="M9 23Q10 15 16.500 15Q23 15 24 23Z" fill="#eef2fc" stroke="#a0aed0"/><path d="M16.500 16v6" stroke="#2858b8" stroke-width="2"/></svg></div>
    </div>
  </div>

  <!-- command line and message log -->
  <div class="flex h-[25px] font-bold text-[12px] tracking-[-0.4px]">
    <div class="ml-px w-[765px] h-6 bg-white border-b border-[#8a8a8a] pl-[2px] leading-[21px]">&gt;</div>
    <div class="ml-px w-[767px] h-[25px] flex bg-white border border-[#a0a4aa] overflow-hidden">
      <div class="pl-[2px] leading-[13px] -mt-[2px]">genselect target node<br>genselect clear</div>
      <div class="ml-auto w-4 bg-[#f0f0f0]"></div>
    </div>
  </div>
  <footer class="h-[22px] border-t border-[#d7d7d7] border-b border-b-[#3a3536] flex items-center justify-end font-['Noto_Sans',sans-serif] font-bold text-[11px] tracking-[-0.4px]">
    <div class="w-[148px] h-[18px] border-x border-[#d4d4d4] pl-1 mr-px leading-[20px]">Fast Renderer</div>
  </footer>
</div>

<!-- node selection window -->
<section class="absolute left-[18px] top-[501px] w-[327px] h-[217px] rounded-lg bg-[#f0f0f0] overflow-hidden shadow-[0_0_0_1px_#a9adb8,0_14px_24px_rgba(0,0,0,0.32)] text-[10px] tracking-[-0.35px]">
  <div class="h-[30px] bg-[#f3f3f3] flex items-center justify-between pl-[9px] pr-[9px] text-[#8c8c8c] font-['Noto_Sans',sans-serif] text-[12px] tracking-[-0.25px]"><span>Sel. Nodes(0)</span><svg class="w-[11px] h-[11px] -mt-0.5" viewBox="0 0 11 11"><path d="M.5 .5L10.500 10.500M10.500 .5L.5 10.500" stroke="#d2d2d2"/></svg></div>
  <div class="flex">
    <div class="w-[191px]">
      <div class="flex pl-[29px] pt-[3px] h-[84px] [&_svg]:w-[13px] [&_svg]:h-[13px] [&_svg]:mr-[3px] [&_svg]:mt-0.5 [&_p]:flex [&_p]:items-center [&_p]:h-[15px]">
        <div class="w-[41px]"><p><svg><use href="#ron"/></svg>Pick</p><p><svg><use href="#roff"/></svg>Area</p><p><svg><use href="#roff"/></svg>Poly</p><p><svg><use href="#roff"/></svg>Sel1</p><p><svg><use href="#roff"/></svg>Sphe</p></div>
        <div class="w-[47px]"><p><svg><use href="#roff"/></svg>Box</p><p><svg><use href="#roff"/></svg>Prox</p><p><svg><use href="#roff"/></svg>Circ</p><p><svg><use href="#roff"/></svg>Frin</p><p><svg><use href="#roff"/></svg>Plan</p></div>
        <div><p class="text-[#8a8a8a]"><svg><use href="#rond"/></svg>In</p><p class="text-[#8a8a8a]"><svg><use href="#rdis"/></svg>Out</p><p class="mt-[7px]"><svg><use href="#ron"/></svg>Add</p><p><svg><use href="#roff"/></svg>Rm</p></div>
      </div>
      <div class="flex items-center h-[20px] pl-1">
        <span class="w-[14px]">ID</span><div class="w-[63px] h-[18px] bg-white border border-[#e5e5e5] border-b-[#868686]"></div><span class="ml-[3px] w-[24px]">Type</span><div class="w-[59px] h-5 bg-[#f7f7f7] border border-[#e6e6e6] flex items-center justify-between pl-[2px] pr-1 text-[#8a8a8a]">any<svg class="w-[9px] h-[6px]"><use href="#chev"/></svg></div>
      </div>
      <div class="flex items-center h-[21px] pl-1 [&>svg]:w-[13px] [&>svg]:h-[13px] [&>svg]:mt-0.5 [&>svg]:mr-[2px]">
        <svg><use href="#coff"/></svg><span class="w-[66px] tracking-[-0.45px]">Label selection</span><svg><use href="#coff"/></svg><span class="w-[36px]">3DSurf</span><svg><use href="#coff"/></svg><span>Entire</span>
      </div>
      <div class="flex items-center h-[21px] pl-1">
        <svg class="w-[13px] h-[13px] mr-[2px] mt-px"><use href="#coff"/></svg><span class="w-[26px]">Prop</span><svg class="w-[13px] h-[13px] mr-[2px] mt-px"><use href="#coff"/></svg><span class="w-[28px]">Adap</span><span class="w-[19px] text-[#9a9a9a] [text-shadow:1px_1px_#fff]">Ang</span><div class="w-[70px] h-[19px] shrink-0 bg-white border border-[#c8c8c8] rounded-xs flex items-center justify-between p-[2px] pr-1 text-[#777]"><span class="w-[47px] h-[13px] leading-[13px] pl-0.5 bg-[#f0f0f0]">5</span><svg class="w-[9px] h-[6px]"><use href="#chev"/></svg></div>
      </div>
    </div>
    <div class="w-[62px] pt-[2px] flex flex-col gap-[2px] [&>button]:h-[18px] [&>button]:shrink-0 [&>button]:bg-[#fdfdfd] [&>button]:border [&>button]:border-[#cfcfcf] [&>button]:rounded-[3px] [&>button]:leading-4">
      <button>Adjacent</button><button>Attach</button><button>Clear</button><button>Save</button><button class="mt-px">Load</button><button class="mt-px">Deselect</button><button class="mt-px">Whole</button><button class="mt-px">Active</button><button class="mt-px">Reverse</button>
    </div>
    <div class="pl-[10px] tracking-[-0.2px] [&_svg]:w-[13px] [&_svg]:h-[13px] [&_svg]:mr-[2px] [&_svg]:mt-0.5 [&_p]:flex [&_p]:items-center [&_p]:h-[16.8px]">
      <p><svg><use href="#ron"/></svg>ByNode</p><p><svg><use href="#roff"/></svg>ByElem</p><p><svg><use href="#roff"/></svg>ByPart</p><p class="text-[#8a8a8a]"><svg><use href="#rdis"/></svg>ByGPart</p><p><svg><use href="#roff"/></svg>BySubsys</p><p class="-ml-px"><svg><use href="#roff"/></svg>BySet/Grp</p><p><svg><use href="#roff"/></svg>ByEdge</p><p><svg><use href="#roff"/></svg>ByPath</p><p><svg><use href="#roff"/></svg>BySegm</p><p class="text-[#8a8a8a]"><svg><use href="#rdis"/></svg>ByCurve</p><p class="text-[#8a8a8a]"><svg><use href="#rdis"/></svg>BySurf</p>
    </div>
  </div>
  <svg class="absolute right-[2px] bottom-[2px] w-[9px] h-[9px]"><use href="#grip"/></svg>
</section>

<!-- entity creation window -->
<section class="absolute left-[1057px] top-[44px] w-[434px] h-[743px] rounded-lg bg-[#f0f0f0] overflow-hidden shadow-[0_0_0_1px_#9da0a6,0_20px_36px_rgba(0,0,0,0.42)] text-[12px] tracking-[-0.2px]">
  <div class="h-[30px] bg-[#edf2f8] flex items-center justify-between pl-2 pr-[9px] font-['Noto_Sans',sans-serif] tracking-[-0.27px]"><span>Entity Creation</span><svg class="w-[11px] h-[11px] -mt-0.5" viewBox="0 0 11 11"><path d="M.5 .5L10.500 10.500M10.500 .5L.5 10.500" stroke="#111" stroke-width="1.200"/></svg></div>
  <div class="flex h-[713px]">
    <div class="w-[15px] pt-[349px] pl-[6px] text-[10px]">&lt;</div>
    <div class="relative w-[180px] mr-px h-[704px] mt-[5px] border border-[#828790] bg-white pt-[2px] pl-[9px] [&>p]:h-4 [&>p]:flex [&>p]:items-center [&_svg]:w-[9px] [&_svg]:h-[9px] [&_svg]:z-10 [&_span]:pl-[7px] [&_i]:w-[3px] [&_i]:h-px [&_i]:bg-[#aaa]">
      <div class="absolute left-[13px] top-[14px] h-[232px] border-l border-dotted border-[#999]"></div>
      <p><svg><use href="#minus"/></svg><i class="-mr-[3px]"></i><span class="ml-px">Airbag</span></p>
      <p class="pl-[22px]"><b class="h-2 w-[9px] -mt-2 border-l border-b border-dotted border-[#999]"></b><span class="-ml-[3px]">ShellRefGM</span></p>
      <p><svg><use href="#plus"/></svg><i class="-mr-[3px]"></i><span class="ml-px">Application</span></p>
      <p><svg><use href="#plus"/></svg><i class="-mr-[3px]"></i><span class="ml-[6px] bg-[#f0f0f0] !pl-[2px] pr-0.5">Boundary</span></p>
      <p><svg><use href="#plus"/></svg><i class="-mr-[3px]"></i><span class="ml-px">Constrained</span></p>
      <p><svg><use href="#plus"/></svg><i class="-mr-[3px]"></i><span class="ml-px">Contact</span></p>
      <p><svg><use href="#plus"/></svg><i class="-mr-[3px]"></i><span class="ml-px">Damping</span></p>
      <p><svg><use href="#plus"/></svg><i class="-mr-[3px]"></i><span class="ml-px">Database</span></p>
      <p><svg><use href="#plus"/></svg><i class="-mr-[3px]"></i><span class="ml-px">Define</span></p>
      <p><svg><use href="#plus"/></svg><i class="-mr-[3px]"></i><span class="ml-px">Element</span></p>
      <p><svg><use href="#plus"/></svg><i class="-mr-[3px]"></i><span class="ml-px">Initial</span></p>
      <p><svg><use href="#plus"/></svg><i class="-mr-[3px]"></i><span class="ml-px tracking-0">Integration</span></p>
      <p><svg><use href="#plus"/></svg><i class="-mr-[3px]"></i><span class="ml-px">Load</span></p>
      <p><svg><use href="#plus"/></svg><i class="-mr-[3px]"></i><span class="ml-px">Rigidwall</span></p>
      <p><svg><use href="#plus"/></svg><i class="-mr-[3px]"></i><span class="ml-px">Section</span></p>
      <p><svg><use href="#plus"/></svg><i class="-mr-[3px]"></i><span class="ml-px">Set Data</span></p>
    </div>
    <div class="ml-px w-[229px] flex flex-col [&>*]:shrink-0 [&>hr]:h-0.5 [&>hr]:border-t [&>hr]:border-[#9a9a9a] [&>hr]:bg-white">
      <div class="h-7 pt-[5px] flex items-center [&>svg]:w-[13px] [&>svg]:h-[13px] [&>svg]:mr-[3px]">
        <svg class="ml-[22px]"><use href="#roff"/></svg><span class="w-[40px]">Show</span><svg><use href="#ron"/></svg><span class="w-[27px]">Cre</span><svg><use href="#roff"/></svg><span class="w-[32px]">Mod</span><svg><use href="#roff"/></svg><span>Del</span>
      </div>
      <hr>
      <div class="h-7 flex items-center"><span class="w-[35px] text-[#a5a5a5] [text-shadow:1px_1px_#fff]">Label:</span><div class="w-[193px] h-[21px] bg-[#f7f7f7] border border-[#e9e9e9] flex items-center justify-between pl-[3px] pr-[3px] text-[#808080]">None<svg class="w-[10px] h-[6px] text-[#b0b0b0]"><use href="#chev"/></svg></div></div>
      <hr>
      <div class="h-[25px] pt-px flex items-center [&>svg]:w-[13px] [&>svg]:h-[13px] [&>svg]:mr-[3px]"><svg class="ml-[34px]"><use href="#ron"/></svg><span class="w-[91px]">Set</span><svg><use href="#roff"/></svg><span>Node</span></div>
      <div class="h-5 flex gap-[5px] pl-[5px] text-[#9a9a9a] tracking-0 [&>button]:bg-[#f8f8f8] [&>button]:border [&>button]:border-[#e6e6e6] [&>button]:rounded-[3px]"><button class="w-[98px]">Auto Merge</button><button class="w-[116px]">Convert NodeTR</button></div>
      <div class="h-[27px] flex items-center pl-[9px]"><svg class="w-[13px] h-[13px] mr-[3px]"><use href="#coff"/></svg><span class="w-[83px] tracking-[-0.35px]">Cylindrical CS</span><div class="w-[118px] h-[21px] bg-[#f7f7f7] border border-[#e9e9e9] flex items-center justify-between pl-[2px] pr-[3px] text-[#808080]">Z<svg class="w-[10px] h-[6px] text-[#b0b0b0]"><use href="#chev"/></svg></div></div>
      <div class="h-[23px] flex items-center pl-[26px]"><span class="w-[82px]">Sym plane</span><div class="w-[118px] h-[21px] bg-white border border-[#cdcdcd] rounded-xs flex items-center justify-between pl-[2px] pr-[3px]"><span class="w-[95px] h-4 leading-[15px] -indent-px border border-dotted border-black tracking-[0.15px]">XOZ[010101]</span><svg class="w-[10px] h-[6px] text-[#555]"><use href="#chev"/></svg></div></div>
      <div class="h-[23px] flex items-center pl-[3px] [&>span]:w-[37px] [&>span]:text-center"><span>X</span><span>Y</span><span>Z</span><span>RX</span><span>RY</span><span class="ml-px">RZ</span></div>
      <div class="h-[15px] flex items-center pl-[14px] gap-6 [&>svg]:w-[13px] [&>svg]:h-[13px]"><svg><use href="#coff"/></svg><svg><use href="#con"/></svg><svg><use href="#coff"/></svg><svg><use href="#con"/></svg><svg><use href="#coff"/></svg><svg class="ml-px"><use href="#con"/></svg></div>
      <div class="mt-[5px] h-[22px] flex items-center"><span class="w-[50px] mr-[3px] text-right">ID</span><div class="w-[172px] h-full bg-white border border-[#e8e8e8] border-b-[#868686]"></div></div>
      <div class="mt-[2px] h-[22px] flex items-center"><span class="w-[50px] mr-[3px] text-right">Title</span><div class="w-[172px] h-full bg-white border border-[#e8e8e8] border-b-[#868686]"></div></div>
      <div class="mt-[3px] h-5 flex items-center"><svg class="ml-1 w-[13px] h-[13px] mr-[3px]"><use href="#coff"/></svg><span class="w-[33px]">Birth</span><div class="w-[172px] h-full border border-[#fafafa] text-right pr-1 text-[#8a8a8a]">0.0</div></div>
      <div class="mt-1 h-5 flex items-center"><span class="w-[50px] mr-[3px] text-right">Death</span><div class="w-[172px] h-full border border-[#fafafa] text-right pr-1 text-[#8a8a8a]">1.0E+20</div></div>
      <div class="mt-1 h-[22px] flex items-center"><span class="w-[50px] mr-1 text-right text-[#1400f0]">CID</span><div class="w-[170px] h-full bg-white border border-[#e8e8e8] border-b-[#868686]"></div></div>
      <div class="mt-1 h-[22px] flex items-center"><span class="w-[50px] mr-1 text-right text-[#1400f0]">NSID</span><div class="w-[120px] h-full bg-white border border-[#e8e8e8] border-b-[#868686] text-right pr-[5px] leading-5">1</div><button class="ml-1 w-[46px] h-5 bg-[#fdfdfd] border border-[#cfcfcf] rounded-[3px]">NewId</button></div>
      <hr class="mt-[7px]">
      <div class="mt-1 h-[21px] flex gap-1 pl-[2px] text-[#9a9a9a] [&>button]:w-[53px] [&>button]:bg-[#f8f8f8] [&>button]:border [&>button]:border-[#e6e6e6] [&>button]:rounded-[3px]"><button>All</button><button>None</button><button>Rev</button><button>AList</button></div>
      <div class="mt-1.5 h-[21px] flex gap-1 pl-[2px] [&>button]:w-[72.500px] [&>button]:border [&>button]:rounded-[3px]"><button class="bg-[#fdfdfd] border-[#cdcdcd]">Apply</button><button class="bg-[#f8f8f8] border-[#e6e6e6] text-[#9a9a9a]">Cancel</button><button class="bg-[#fdfdfd] border-[#cdcdcd]">Write</button></div>
      <div class="mt-[5px] ml-px h-[270px] w-[228px] bg-white border border-[#828790]"></div>
      <hr class="mt-[3px]">
      <button class="mt-[2px] ml-[78px] w-[73px] h-[21px] bg-[#fdfdfd] border border-[#cdcdcd] rounded-[3px]">Done</button>
    </div>
  </div>
  <svg class="absolute right-[2px] bottom-[2px] w-[9px] h-[9px]"><use href="#grip"/></svg>
</section>
</body>
</html>
